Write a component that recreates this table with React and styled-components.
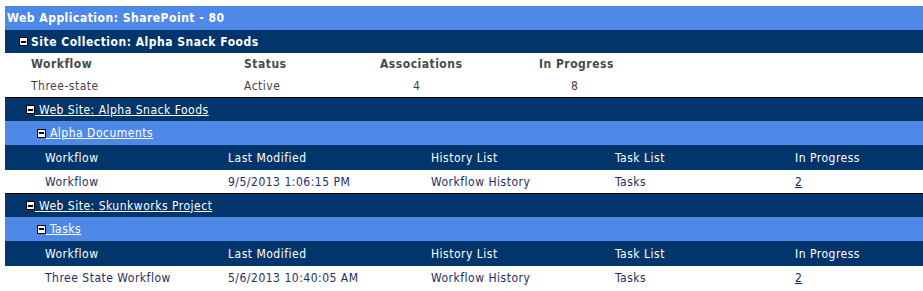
import React from 'react';
import styled, { createGlobalStyle } from 'styled-components';

const GlobalStyle = createGlobalStyle`
  body {
    margin: 0;
    background: #ffffff;
    font-family: "DejaVu Sans Condensed", "DejaVu Sans", Tahoma, sans-serif;
    font-size: 12px;
    letter-spacing: 0.5px;
  }
`;

const NAVY = '#02356b';
const LIGHT = '#4f89e8';

const Page = styled.div`
  padding: 6px 0 0 5px;
`;

const Bar = styled.div`
  display: flex;
  align-items: center;
  height: ${(p) => p.h}px;
  padding-left: ${(p) => p.indent}px;
  background: ${(p) => (p.light ? LIGHT : NAVY)};
  color: #ffffff;
  font-weight: ${(p) => (p.bold ? 'bold' : 'normal')};
  border-top: ${(p) => (p.ruled ? '1px solid #000' : 'none')};
  box-sizing: border-box;
`;

const Toggle = styled.span`
  display: inline-flex;
  align-items: center;
  justify-content: center;
  flex: none;
  width: 9px;
  height: 9px;
  box-sizing: border-box;
  background: #ffffff;
  border: 1px solid #000;
  margin-right: ${(p) => (p.tight ? 0 : 3)}px;
  &::after {
    content: '';
    width: 5px;
    height: 2px;
    background: #000;
  }
`;

const BarLink = styled.a`
  color: #ffffff;
  text-decoration: underline;
  white-space: pre;
`;

const Grid = styled.div`
  display: grid;
  grid-template-columns: ${(p) => p.cols};
  align-items: center;
  height: ${(p) => p.h}px;
  padding-left: ${(p) => p.indent}px;
  box-sizing: border-box;
  background: ${(p) => (p.head ? NAVY : '#ffffff')};
  color: ${(p) => (p.head ? '#ffffff' : p.ink || '#1f2e66')};
  font-weight: ${(p) => (p.bold ? 'bold' : 'normal')};
`;

const Cell = styled.span`
  padding-left: ${(p) => p.offset || 0}px;
`;

const CountLink = styled.a`
  color: #1b2450;
  text-decoration: underline;
`;

const collectionCols = '213px 136px 159px 1fr';
const listCols = '183px 203px 184px 180px 1fr';

const libraries = [
  {
    site: 'Web Site: Alpha Snack Foods',
    list: 'Alpha Documents',
    workflow: 'Workflow',
    modified: '9/5/2013 1:06:15 PM',
    history: 'Workflow History',
    tasks: 'Tasks',
    progress: '2',
  },
  {
    site: 'Web Site: Skunkworks Project',
    list: 'Tasks',
    workflow: 'Three State Workflow',
    modified: '5/6/2013 10:40:05 AM',
    history: 'Workflow History',
    tasks: 'Tasks',
    progress: '2',
  },
];

const App = () => (
  <Page>
    <GlobalStyle />
    <Bar h={24} indent={2} light bold>
      Web Application: SharePoint - 80
    </Bar>
    <Bar h={23} indent={14} bold>
      <Toggle />
      Site Collection: Alpha Snack Foods
    </Bar>
    <Grid cols={collectionCols} h={22} indent={26} bold ink="#4a4a4a">
      <Cell>Workflow</Cell>
      <Cell>Status</Cell>
      <Cell>Associations</Cell>
      <Cell>In Progress</Cell>
    </Grid>
    <Grid cols={collectionCols} h={22} indent={26} ink="#4a3f45">
      <Cell>Three-state</Cell>
      <Cell>Active</Cell>
      <Cell offset={33}>4</Cell>
      <Cell offset={32}>8</Cell>
    </Grid>
    {libraries.map((lib) => (
      <React.Fragment key={lib.site}>
        <Bar h={24} indent={21} ruled>
          <Toggle tight />
          <BarLink href="#"> {lib.site}</BarLink>
        </Bar>
        <Bar h={24} indent={32} light>
          <Toggle tight />
          <BarLink href="#"> {lib.list}</BarLink>
        </Bar>
        <Grid cols={listCols} h={25} indent={40} head>
          <Cell>Workflow</Cell>
          <Cell>Last Modified</Cell>
          <Cell>History List</Cell>
          <Cell>Task List</Cell>
          <Cell>In Progress</Cell>
        </Grid>
        <Grid cols={listCols} h={23} indent={40}>
          <Cell>{lib.workflow}</Cell>
          <Cell>{lib.modified}</Cell>
          <Cell>{lib.history}</Cell>
          <Cell>{lib.tasks}</Cell>
          <Cell>
            <CountLink href="#">{lib.progress}</CountLink>
          </Cell>
        </Grid>
      </React.Fragment>
    ))}
  </Page>
);

export default App;
